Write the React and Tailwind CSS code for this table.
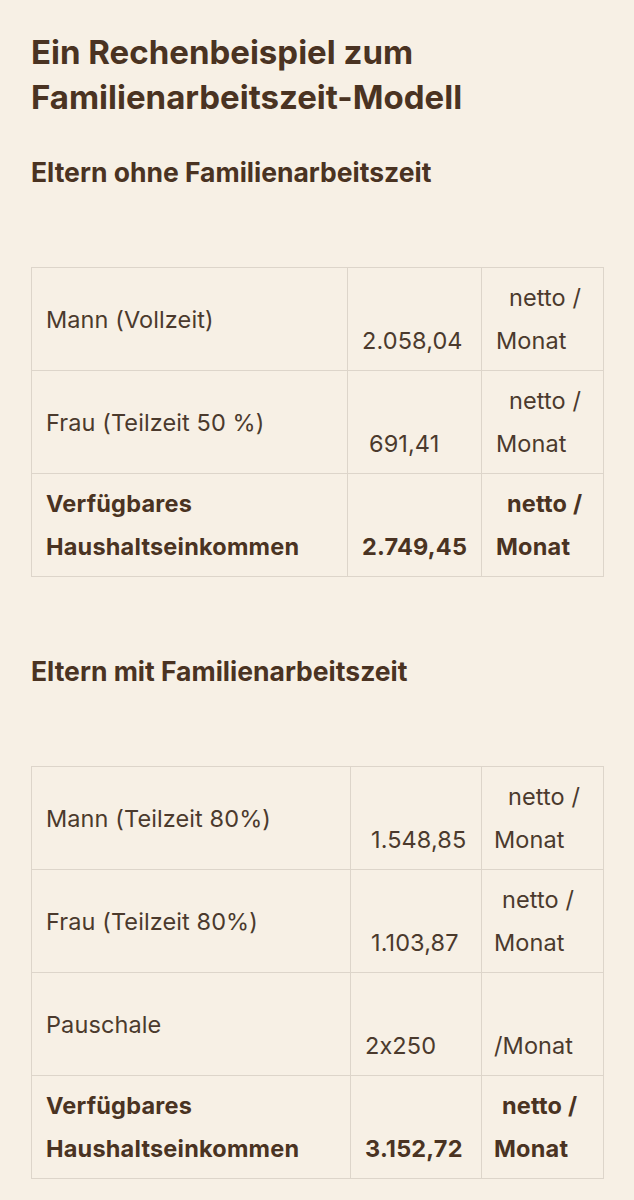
import React from "react";

function Row({ label, value, valuePad = "", top = "netto /", topPad = "pl-[13px]", unitPad = "pl-[14px]", bottom = "Monat", bold = false }) {
  const w = bold ? "font-bold text-[#4a3322] tracking-[0.2px]" : "font-normal tracking-[0.1px]";
  return (
    <tr className={`h-[103px] ${w}`}>
      <td className="border border-[#ddd5ca] pl-[14px] pr-2 align-middle">
        {label}
      </td>
      <td className="border border-[#ddd5ca] pl-[14px] pr-1 pb-[8px] align-bottom whitespace-nowrap">
        <span className={valuePad}>{value}</span>
      </td>
      <td className={`border border-[#ddd5ca] ${unitPad} pr-1 py-[8px] align-middle whitespace-nowrap`}>
        <div className={topPad}>{top || "\u00a0"}</div>
        <div>{bottom}</div>
      </td>
    </tr>
  );
}

export default function App() {
  return (
    <div
      className="min-h-[1200px] bg-[#f7f0e5] text-[#4b3a2d] px-[31px] pt-[30px] [font-feature-settings:'calt'_0]"
      style={{ fontFamily: "Inter, 'Noto Sans', sans-serif" }}
    >
      <h1 className="text-[33px] leading-[45px] font-bold text-[#4a3322]">
        Ein Rechenbeispiel zum
        <br />
        Familienarbeitszeit-Modell
      </h1>
      <h2 className="mt-[34px] text-[26.5px] leading-[36px] font-bold text-[#4a3322]">
        Eltern ohne Familienarbeitszeit
      </h2>
      <table className="mt-[77px] w-[572px] border-collapse text-[23.5px] leading-[43px] table-fixed">
        <colgroup>
          <col className="w-[316px]" />
          <col className="w-[134px]" />
          <col className="w-[122px]" />
        </colgroup>
        <tbody>
          <Row label="Mann (Vollzeit)" value="2.058,04" />
          <Row label="Frau (Teilzeit 50 %)" value="691,41" valuePad="pl-[7px]" />
          <Row
            label={<span>Verfügbares<br />Haushaltseinkommen</span>}
            value="2.749,45"
            topPad="pl-[11px]"
            bold
          />
        </tbody>
      </table>
      <h2 className="mt-[76px] text-[26.5px] leading-[36px] font-bold text-[#4a3322]">
        Eltern mit Familienarbeitszeit
      </h2>
      <table className="mt-[77px] w-[572px] border-collapse text-[23.5px] leading-[43px] table-fixed">
        <colgroup>
          <col className="w-[319px]" />
          <col className="w-[131px]" />
          <col className="w-[122px]" />
        </colgroup>
        <tbody>
          <Row label="Mann (Teilzeit 80%)" value="1.548,85" valuePad="pl-[6px]" topPad="pl-[14px]" unitPad="pl-[12px]" />
          <Row label="Frau (Teilzeit 80%)" value="1.103,87" valuePad="pl-[6px]" topPad="pl-[8px]" unitPad="pl-[12px]" />
          <Row label="Pauschale" value="2x250" top="" bottom="/Monat" unitPad="pl-[12px]" />
          <Row
            label={<span>Verfügbares<br />Haushaltseinkommen</span>}
            value="3.152,72"
            topPad="pl-[8px]"
            unitPad="pl-[12px]"
            bold
          />
        </tbody>
      </table>
    </div>
  );
}
